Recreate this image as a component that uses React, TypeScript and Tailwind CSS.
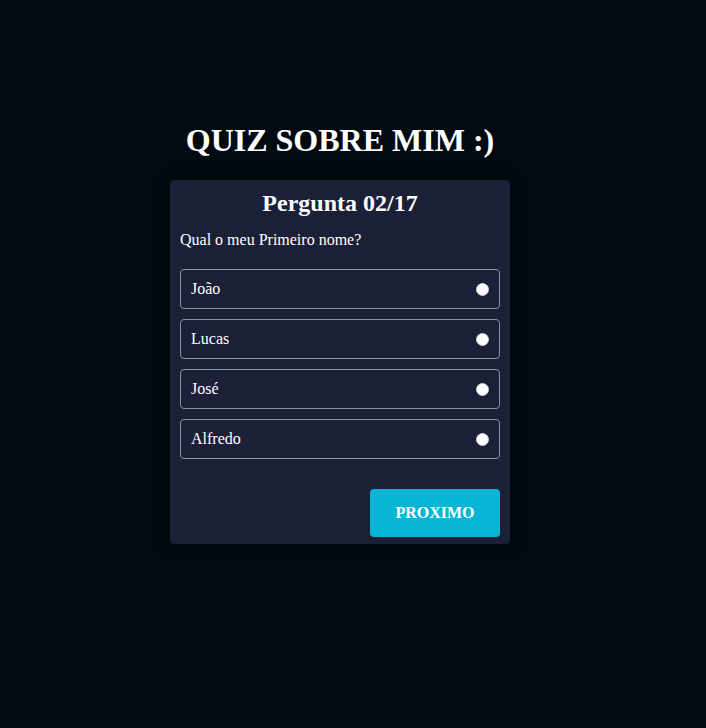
import { useState } from "react";

const options = ["João", "Lucas", "José", "Alfredo"];

function Option({
  label,
  checked,
  onSelect,
}: {
  label: string;
  checked: boolean;
  onSelect: () => void;
}) {
  return (
    <label
      className="flex items-center justify-between h-10 px-[10px] border border-[#8a8ea3] rounded-[4px] cursor-pointer"
      onClick={onSelect}
    >
      <span className="text-[16px] text-white">{label}</span>
      <span className="w-[13px] h-[13px] rounded-full bg-white border border-[#d0d0d0] flex items-center justify-center">
        {checked && <span className="w-[7px] h-[7px] rounded-full bg-[#1b1f38]" />}
      </span>
    </label>
  );
}

function App() {
  const [selected, setSelected] = useState<number | null>(null);

  return (
    <div
      className="min-h-[728px] bg-[#010a10] flex flex-col items-center pt-[117px] pr-[26px]"
      style={{ fontFamily: '"Liberation Serif", "Times New Roman", serif' }}
    >
      <h1 className="text-[32px] font-bold text-white leading-[46px] mb-[17px]">
        QUIZ SOBRE MIM :)
      </h1>
      <div className="w-[340px] bg-[#1b1f38] rounded-[4px] px-[10px] pt-[10px] pb-[7px] shadow-[0_0_12px_rgba(0,0,0,0.6)]">
        <h2 className="text-[24px] font-bold text-white text-center leading-[27px]">
          Pergunta 02/17
        </h2>
        <p className="text-[16px] text-white mt-[14px] leading-[18px]">
          Qual o meu Primeiro nome?
        </p>
        <div className="flex flex-col gap-[10px] mt-[20px]">
          {options.map((opt, i) => (
            <Option
              key={opt}
              label={opt}
              checked={selected === i}
              onSelect={() => setSelected(i)}
            />
          ))}
        </div>
        <div className="flex justify-end mt-[30px]">
          <button className="w-[130px] h-[48px] bg-[#06b6d4] rounded-[4px] text-white font-bold text-[16px] cursor-pointer">
            PROXIMO
          </button>
        </div>
      </div>
    </div>
  );
}

export default App;
